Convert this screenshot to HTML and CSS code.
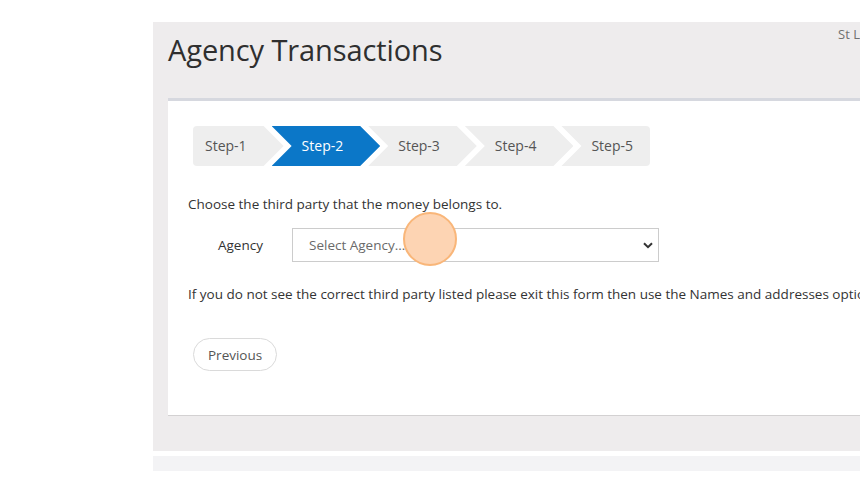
FILE: index.html
```html
<!DOCTYPE html>
<html lang="en">
<head>
<meta charset="utf-8">
<title>Agency Transactions</title>
<link rel="stylesheet" href="styles.css">
</head>
<body>
<div class="page">
  <section class="panel">
    <header class="panel-head">
      <h1 class="title">Agency Transactions</h1>
      <div class="org">St Luke's Parish Church</div>
    </header>
    <div class="card">
      <ol class="steps">
        <li class="step first">Step-1</li>
        <li class="step active">Step-2</li>
        <li class="step">Step-3</li>
        <li class="step">Step-4</li>
        <li class="step last">Step-5</li>
      </ol>
      <p class="lead">Choose the third party that the money belongs to.</p>
      <div class="field-row">
        <label class="field-label" for="agency">Agency</label>
        <div class="select-wrap">
          <select id="agency" class="select">
            <option>Select Agency...</option>
          </select>
          <svg class="select-arrow" width="10" height="7" viewBox="0 0 10 7"><path d="M1 1.2 L5 5.2 L9 1.2" fill="none" stroke="#333" stroke-width="2"/></svg>
          <span class="click-marker"></span>
        </div>
      </div>
      <p class="note">If you do not see the correct third party listed please exit this form then use the Names and addresses option to add the third party first.</p>
      <button class="btn-prev" type="button">Previous</button>
    </div>
  </section>
  <div class="strip"></div>
</div>
</body>
</html>
```

FILE: styles.css
```css
html, body {
  margin: 0;
  padding: 0;
  overflow: hidden;
  background: #ffffff;
}
body {
  font-family: "Open Sans", "Liberation Sans", sans-serif;
  color: #333333;
  font-size: 13.5px;
}
.page {
  padding: 22px 0 0 153px;
  width: 1000px;
}
.panel {
  background: #eeeced;
  padding: 0 0 35px 15px;
}
.panel-head {
  display: grid;
  grid-template-columns: 670px 1fr;
  height: 76px;
}
.title {
  margin: 11px 0 0;
  font-size: 29px;
  line-height: 34px;
  font-weight: 400;
  color: #2f2f2f;
  letter-spacing: -0.1px;
}
.org {
  margin-top: 3px;
  font-size: 13px;
  line-height: 18px;
  color: #707070;
  white-space: nowrap;
}
.card {
  background: #ffffff;
  border-top: 3px solid #d6d8df;
  border-bottom: 1px solid #d3d1d2;
  padding: 25px 0 44px 20px;
}
.steps {
  list-style: none;
  margin: 0 0 0 5px;
  padding: 0;
  display: flex;
  height: 40px;
  font-size: 14px;
}
.step {
  height: 40px;
  line-height: 40px;
  background: #eeeeee;
  color: #555555;
  padding: 0 37px 0 30px;
  margin-left: -12px;
  clip-path: polygon(0 0, calc(100% - 20px) 0, 100% 50%, calc(100% - 20px) 100%, 0 100%, 20px 50%);
}
.step.first {
  margin-left: 0;
  padding-left: 12px;
  border-radius: 4px 0 0 4px;
  clip-path: polygon(0 0, calc(100% - 20px) 0, 100% 50%, calc(100% - 20px) 100%, 0 100%);
}
.step.last {
  padding-right: 17px;
  border-radius: 0 4px 4px 0;
  clip-path: polygon(0 0, 100% 0, 100% 100%, 0 100%, 20px 50%);
}
.step.active {
  background: #0b77c8;
  color: #ffffff;
}
.lead {
  margin: 28px 0 0;
  line-height: 20px;
}
.field-row {
  display: flex;
  align-items: center;
  margin-top: 14px;
  padding-left: 30px;
  height: 34px;
}
.field-label {
  width: 74px;
  color: #333333;
}
.select-wrap {
  position: relative;
  width: 367px;
  height: 34px;
}
.select {
  appearance: none;
  -webkit-appearance: none;
  width: 100%;
  height: 34px;
  box-sizing: border-box;
  border: 1px solid #cccccc;
  border-radius: 0;
  background: #ffffff;
  padding: 0 30px 0 16px;
  font-family: "Open Sans", "Liberation Sans", sans-serif;
  font-size: 13.5px;
  color: #6a6a6a;
}
.select-arrow {
  position: absolute;
  right: 6px;
  top: 14px;
}
.click-marker {
  position: absolute;
  left: 111px;
  top: -16px;
  width: 50px;
  height: 50px;
  border-radius: 50%;
  border: 2px solid #f9b679;
  background: #fdd4b3;
}
.note {
  margin: 22px 0 0;
  line-height: 20px;
  white-space: nowrap;
}
.btn-prev {
  display: block;
  margin: 34px 0 0 5px;
  height: 33px;
  padding: 0 14px;
  border: 1px solid #dadada;
  border-radius: 17px;
  background: #ffffff;
  font-family: "Open Sans", "Liberation Sans", sans-serif;
  font-size: 13.5px;
  color: #555555;
}
.strip {
  margin-top: 5px;
  height: 15px;
  background: #f3f3f5;
}
```
